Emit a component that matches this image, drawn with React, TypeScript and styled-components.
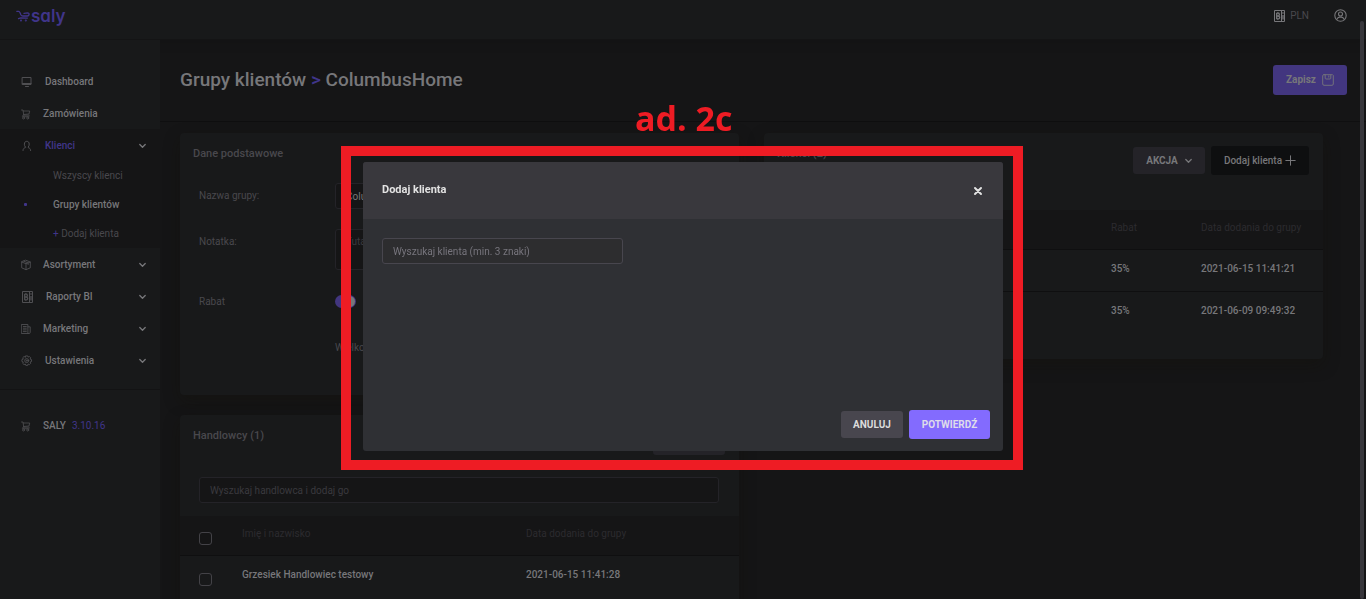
import React from "react";
import styled, { createGlobalStyle, css } from "styled-components";

const c = {
  page: "#151516",
  panel: "#18191a",
  line: "#0f0f10",
  text: "#77777a",
  muted: "#49484d",
  faint: "#2c2b2f",
  accent: "#40358a",
  accentFill: "#42367f",
  red: "#ee1c24",
};

const GlobalStyle = createGlobalStyle`
  * { box-sizing: border-box; }
  html, body, #root { height: 100%; }
  body {
    margin: 0;
    overflow: hidden;
    background: ${c.page};
    color: ${c.text};
    font: 500 10px/14px Roboto, "Liberation Sans", sans-serif;
  }
  button, input, textarea { font: inherit; color: inherit; margin: 0; }
  a { color: inherit; text-decoration: none; }
  h1, h2, p, ul { margin: 0; padding: 0; }
  ul { list-style: none; }
  svg { display: block; flex: none; }
`;

const Shell = styled.div`
  display: flex;
  flex-direction: column;
  height: 100vh;
`;

const TopBar = styled.header`
  display: flex;
  flex: none;
  align-items: center;
  justify-content: space-between;
  height: 40px;
  padding: 0 19px 8px 16px;
  background: ${c.panel};
  border-bottom: 1px solid #141415;
  box-shadow: 0 2px 12px rgba(0, 0, 0, 0.12);
`;

const Logo = styled.a`
  display: flex;
  align-items: center;
  gap: 1px;
  color: ${c.accent};
  font: 600 17px/20px Inter, sans-serif;
  font-feature-settings: "cv11";
`;

const TopTools = styled.div`
  display: flex;
  align-items: center;
  gap: 25px;
`;

const Currency = styled.span`
  display: flex;
  align-items: center;
  gap: 4px;
  color: ${c.muted};
  font-weight: 400;
  svg { color: ${c.text}; }
`;

const IconButton = styled.button`
  display: flex;
  padding: 0;
  border: 0;
  background: none;
`;

const CloseButton = styled(IconButton)`
  padding-top: 3px;
`;

const Columns = styled.div`
  display: flex;
  flex: 1;
  min-height: 0;
`;

const Sidebar = styled.nav`
  flex: none;
  width: 160px;
  padding-top: 25px;
  background: ${c.panel};
`;

const NavLink = styled.a<{ $active?: boolean }>`
  display: flex;
  align-items: center;
  gap: 12px;
  height: 32px;
  padding: 2px 14px 0 21px;
  color: ${(p) => (p.$active ? c.accent : c.text)};
  > svg { color: #4f4f52; }
  > svg:last-child:not(:first-child) { margin-left: auto; color: ${c.text}; }
`;

const ActiveGroup = styled.li`
  background: ${c.page};
`;

const SubLink = styled.a<{ $current?: boolean }>`
  display: flex;
  align-items: center;
  height: 29px;
  padding-left: 24px;
  color: ${(p) => (p.$current ? c.text : c.muted)};
  font-weight: ${(p) => (p.$current ? 500 : 400)};
  &::before {
    content: "";
    width: 3px;
    height: 3px;
    margin-right: 26px;
    border-radius: 1px;
    background: ${(p) => (p.$current ? c.accent : "transparent")};
  }
`;

const Accent = styled.span`
  color: ${c.accent};
`;

const Version = styled.div`
  margin-top: 13px;
  padding-top: 19px;
  border-top: 1px solid #131314;
`;

const VersionNumber = styled.span`
  margin-left: -6px;
  color: ${c.accent};
  font-weight: 400;
`;

const Main = styled.main`
  flex: 1;
  min-width: 0;
  overflow: hidden;
`;

const PageHead = styled.div`
  display: flex;
  align-items: center;
  justify-content: space-between;
  height: 82px;
  padding: 0 19px 2px 20px;
  border-bottom: 1px solid ${c.line};
`;

const PageTitle = styled.h1`
  font-size: 19px;
  line-height: 24px;
  font-weight: 500;
`;

const Button = styled.button<{ $kind: "save" | "grey" | "dark" | "cancel" | "confirm" }>`
  display: flex;
  align-items: center;
  justify-content: center;
  padding: 0;
  height: 29px;
  border: 0;
  border-radius: 3px;
  font-weight: 700;
  white-space: nowrap;
  ${(p) => p.$kind === "save" && css`height: 30px; width: 74px; gap: 6px; background: ${c.accentFill};`}
  ${(p) => p.$kind === "grey" && css`height: 27px; width: 72px; gap: 7px; background: #242328;`}
  ${(p) => p.$kind === "dark" && css`width: 98px; gap: 3px; background: #0e0f10; font-weight: 500;`}
  ${(p) => p.$kind === "cancel" && css`height: 27px; width: 62px; background: #48464e; color: #dcdcdc;`}
  ${(p) => p.$kind === "confirm" && css`width: 81px; background: #836bfe; color: #dedcea;`}
`;

const Grid = styled.div`
  display: grid;
  grid-template-columns: 1fr 1fr;
  gap: 25px;
  align-items: start;
  padding: 11px 43px 0 20px;
`;

const Stack = styled.div`
  display: grid;
  gap: 20px;
`;

const Card = styled.section`
  padding-bottom: 26px;
  border-radius: 4px;
  background: ${c.panel};
  box-shadow: 0 6px 16px rgba(20, 16, 10, 0.35);
`;

const CardHead = styled.div<{ $height: number }>`
  display: flex;
  align-items: flex-start;
  justify-content: space-between;
  height: ${(p) => p.$height}px;
  padding: 13px 14px 0 13px;
`;

const CardTitle = styled.h2`
  color: ${c.muted};
  font-size: 11px;
  line-height: 16px;
  font-weight: 500;
`;

const CardActions = styled.div`
  display: flex;
  align-items: center;
  gap: 6px;
`;

const Field = styled.div<{ $gap: number }>`
  display: grid;
  grid-template-columns: 136px 1fr;
  align-items: start;
  margin-bottom: ${(p) => p.$gap}px;
  padding: 0 20px 0 19px;
`;

const FieldLabel = styled.label`
  padding-top: 6px;
  color: ${c.muted};
  font-weight: 400;
`;

const inputStyle = css`
  display: block;
  width: 100%;
  height: 26px;
  padding: 0 10px;
  border: 1px solid #242328;
  border-radius: 3px;
  background: ${c.page};
  outline: 0;
  font-weight: 400;
  &::placeholder { color: #3a393e; opacity: 1; }
`;

const TextInput = styled.input`
  ${inputStyle}
`;

const NoteInput = styled.textarea`
  ${inputStyle}
  height: 41px;
  padding-top: 5px;
  resize: none;
`;

const SwitchCell = styled.div`
  padding-top: 6px;
`;

const Switch = styled.input`
  appearance: none;
  display: flex;
  justify-content: flex-end;
  width: 21px;
  height: 13px;
  border-radius: 7px;
  background: ${c.accentFill};
  &::after {
    content: "";
    width: 11px;
    height: 11px;
    margin: 1px;
    border-radius: 50%;
    background: #77777a;
  }
`;

const SearchRow = styled.div`
  padding: 0 20px 13px 19px;
`;

const Table = styled.table`
  width: 100%;
  border-collapse: collapse;
  table-layout: fixed;
  th, td {
    padding: 0;
    text-align: left;
    white-space: nowrap;
  }
  th {
    height: 39px;
    padding-bottom: 2px;
    background: ${c.page};
    color: ${c.faint};
    font-weight: 400;
  }
  td { height: 42px; padding-bottom: 2px; }
  tr { border-bottom: 1px solid ${c.line}; }
  tbody tr:last-child { border-bottom: 0; }
`;

const Check = styled.input`
  appearance: none;
  display: block;
  width: 13px;
  height: 13px;
  && { margin: 9px 0 0 19px; }
  border: 1px solid #434247;
  border-radius: 3px;
`;

const ScrollThumb = styled.div`
  position: fixed;
  top: 21px;
  right: 2px;
  bottom: 0;
  width: 4px;
  border-radius: 2px;
  background: #37363b;
`;

const Overlay = styled.div`
  position: fixed;
  inset: 0;
  display: flex;
  align-items: flex-start;
  justify-content: center;
  padding-top: 162px;
`;

const Modal = styled.div`
  width: 640px;
  border-radius: 3px;
  overflow: hidden;
  background: #2f3034;
  color: #e2e2e2;
`;

const ModalHead = styled.div`
  display: flex;
  align-items: center;
  justify-content: space-between;
  height: 57px;
  padding: 0 20px 2px 19px;
  background: #39383d;
  h2 { font-size: 11px; line-height: 16px; font-weight: 700; }
`;

const ModalBody = styled.div`
  min-height: 191px;
  padding: 19px;
`;

const ModalSearch = styled.input`
  ${inputStyle}
  width: 241px;
  border-color: #48464e;
  background: #2d2d2f;
  &::placeholder { color: #77757d; }
`;

const ModalFoot = styled.div`
  display: flex;
  align-items: center;
  justify-content: flex-end;
  gap: 6px;
  padding: 0 13px 12px;
`;

const Frame = styled.div`
  position: absolute;
  top: 146px;
  left: calc(50% - 342px);
  width: 682px;
  height: 324px;
  border: 10px solid ${c.red};
  pointer-events: none;
`;

const Caption = styled.p`
  position: absolute;
  top: 95px;
  left: calc(50% - 48px);
  color: ${c.red};
  font: 700 34px/46px "Open Sans", "Noto Sans", sans-serif;
`;

const stroke = { fill: "none", stroke: "currentColor", strokeLinecap: "round", strokeLinejoin: "round" } as const;

const Chevron = () => (
  <svg width="7" height="6" viewBox="0 0 7 6" {...stroke} strokeWidth="1.3"><path d="M.8 1.500 3.500 4.300 6.200 1.500" /></svg>
);
const MonitorIcon = () => (
  <svg width="12" height="12" viewBox="0 0 12 12" {...stroke}><path d="M1.500 1.500h8.500v7H1.500zM1.500 7.500h8.500M4.500 10.500h3" /></svg>
);
const CartIcon = () => (
  <svg width="10" height="12" viewBox="0 0 10 12" {...stroke} strokeWidth="0.8">
    <path d="M.5 2h1.500l.8 5.200h5.500M2.200 3h6.500L8 6 2.700 6.500M2.800 7.200C1 7.200.8 8.700 2 8.700h6" />
    <circle cx="2.500" cy="10" r="1" /><circle cx="6.700" cy="10" r="1" />
  </svg>
);
const PersonIcon = () => (
  <svg width="12" height="12" viewBox="0 0 12 12" {...stroke}>
    <path d="M4.400 7C3.600 6.200 3.400 5.200 3.400 4c0-1.700 1-2.700 2.400-2.700S8.200 2.300 8.200 4c0 1.200-.2 2.200-1 3l.2.8c1.400.3 2.200 1 2.200 2.700M4.400 7l-.2.8C2.800 8.100 2 8.800 2 10.500" />
  </svg>
);
const BoxIcon = () => (
  <svg width="10" height="12" viewBox="0 0 10 12" {...stroke} strokeWidth="0.9">
    <path d="M5 1.300 9.300 3v5.800L5 10.700.7 8.800V3zM.7 3 5 4.700 9.300 3M5 4.700v6M2.800 2.200 7.100 3.900v1.700" />
  </svg>
);
const BiIcon = () => (
  <svg width="13" height="12" viewBox="0 0 13 12" {...stroke} strokeLinecap="butt" strokeLinejoin="miter">
    <path d="M1.500.5h10v11h-10zM8.500.5v11" />
    <path d="M3.700 3v6M3.700 3h1.300c1.800 0 1.800 3 0 3 2.200 0 2.200 3 0 3H3.700M3.700 6H5M10 5v4.500M10 2.300v1.400" strokeWidth="1.300" />
  </svg>
);
const NewsIcon = () => (
  <svg width="10" height="12" viewBox="0 0 10 12" {...stroke} strokeWidth="0.9">
    <path d="M.7 1.500h6.200v9H.7zM6.900 3.800h2.300v5.700c0 .6-.4 1-1.100 1H6.900M2.300 3.500h3M2.300 5.200h3M2.300 6.900h3M2.300 8.600h3" />
  </svg>
);
const GearIcon = () => (
  <svg width="12" height="12" viewBox="0 0 12 12" {...stroke} strokeWidth="0.9">
    <path d="M4.800.9h1.900l.4 1.200 1.300-.6 1.300 1.300-.6 1.300 1.400.5v1.900l-1.400.5.6 1.300-1.300 1.300-1.300-.6-.4 1.400H4.800l-.5-1.400-1.300.6-1.300-1.300.6-1.300L.9 6.500V4.600l1.400-.5-.6-1.300L3 1.500l1.300.6z" />
    <circle cx="5.700" cy="5.600" r="2" /><circle cx="5.700" cy="5.600" r=".5" />
  </svg>
);
const AccountIcon = () => (
  <svg width="13" height="13" viewBox="0 0 13 13" {...stroke} strokeWidth="1.100">
    <circle cx="6.500" cy="6.500" r="5.700" /><circle cx="6.500" cy="5" r="2" />
    <path d="M3.200 10c.3-1.300 1.300-1.800 2.300-1.900h2c1 .1 2 .6 2.300 1.900" />
  </svg>
);
const SaveIcon = () => (
  <svg width="12" height="12" viewBox="0 0 12 12" {...stroke} strokeWidth="0.9">
    <path d="M2 .7h8.500l.8.8V10c0 .8-.5 1.300-1.300 1.300H2C1.200 11.300.7 10.800.7 10V2C.7 1.200 1.200.7 2 .7zM3.200.9v3.300c0 .5.3.8.8.8h4c.5 0 .8-.3.8-.8V.9M6.800 1.900v1.300" />
  </svg>
);
const PlusIcon = () => (
  <svg width="11" height="11" viewBox="0 0 11 11" {...stroke}><path d="M5.500 .8v9.400M.8 5.500h9.400" /></svg>
);
const CloseIcon = () => (
  <svg width="10" height="10" viewBox="0 0 10 10" {...stroke} strokeWidth="2"><path d="M2 2l6 6M8 2 2 8" /></svg>
);
const LogoCart = () => (
  <svg width="14" height="12" viewBox="0 0 14 12" {...stroke} strokeWidth="1.300">
    <path d="M.8 1.300h1.800c.7 0 1 .5 1.300 1.200L5 5c.4.8.8 1 1.700 1h4.500c1.200 0 1.900-.8 1.900-1.900 0-.8-.6-1.300-1.500-1.300L8 3.300M2.500 8.700l2.500-.8 6.400.2" />
    <circle cx="5" cy="10.500" r=".4" /><circle cx="9.800" cy="10.500" r=".4" />
  </svg>
);

export default function App() {
  return (
    <>
      <GlobalStyle />
      <Shell>
        <TopBar>
          <Logo href="#"><LogoCart />saly</Logo>
          <TopTools>
            <Currency><BiIcon />PLN</Currency>
            <IconButton aria-label="Konto"><AccountIcon /></IconButton>
          </TopTools>
        </TopBar>
        <Columns>
          <Sidebar>
            <ul>
              <li><NavLink href="#"><MonitorIcon />Dashboard</NavLink></li>
              <li><NavLink href="#"><CartIcon />Zamówienia</NavLink></li>
              <ActiveGroup>
                <NavLink href="#" $active><PersonIcon />Klienci<Chevron /></NavLink>
                <ul>
                  <li><SubLink href="#">Wszyscy klienci</SubLink></li>
                  <li><SubLink href="#" $current>Grupy klientów</SubLink></li>
                  <li><SubLink href="#"><span><Accent>+</Accent> Dodaj klienta</span></SubLink></li>
                </ul>
              </ActiveGroup>
              <li><NavLink href="#"><BoxIcon />Asortyment<Chevron /></NavLink></li>
              <li><NavLink href="#"><BiIcon />Raporty BI<Chevron /></NavLink></li>
              <li><NavLink href="#"><NewsIcon />Marketing<Chevron /></NavLink></li>
              <li><NavLink href="#"><GearIcon />Ustawienia<Chevron /></NavLink></li>
            </ul>
            <Version>
              <NavLink href="#"><CartIcon />SALY<VersionNumber>3.10.16</VersionNumber></NavLink>
            </Version>
          </Sidebar>
          <Main>
            <PageHead>
              <PageTitle>Grupy klientów <Accent>&gt;</Accent> ColumbusHome</PageTitle>
              <Button $kind="save">Zapisz<SaveIcon /></Button>
            </PageHead>
            <Grid>
              <Stack>
                <Card>
                  <CardHead $height={50}><CardTitle>Dane podstawowe</CardTitle></CardHead>
                  <Field $gap={20}>
                    <FieldLabel htmlFor="name">Nazwa grupy:</FieldLabel>
                    <TextInput id="name" defaultValue="ColumbusHome" />
                  </Field>
                  <Field $gap={19}>
                    <FieldLabel htmlFor="note">Notatka:</FieldLabel>
                    <NoteInput id="note" placeholder="Tutaj" />
                  </Field>
                  <Field $gap={26}>
                    <FieldLabel htmlFor="discount">Rabat</FieldLabel>
                    <SwitchCell><Switch id="discount" type="checkbox" role="switch" defaultChecked /></SwitchCell>
                  </Field>
                  <Field $gap={14}>
                    <span />
                    <FieldLabel as="span">Wielkość rabatu</FieldLabel>
                  </Field>
                </Card>
                <Card>
                  <CardHead $height={62}>
                    <CardTitle>Handlowcy (1)</CardTitle>
                    <Button $kind="grey">AKCJA<Chevron /></Button>
                  </CardHead>
                  <SearchRow><TextInput aria-label="Handlowiec" placeholder="Wyszukaj handlowca i dodaj go" /></SearchRow>
                  <Table>
                    <colgroup><col width="62" /><col width="284" /><col /></colgroup>
                    <thead>
                      <tr><th><Check type="checkbox" aria-label="Wszyscy" /></th><th>Imię i nazwisko</th><th>Data dodania do grupy</th></tr>
                    </thead>
                    <tbody>
                      <tr><td><Check type="checkbox" aria-label="Grzesiek" /></td><td>Grzesiek Handlowiec testowy</td><td>2021-06-15 11:41:28</td></tr>
                    </tbody>
                  </Table>
                </Card>
              </Stack>
              <Card>
                <CardHead $height={77}>
                  <CardTitle>Klienci (2)</CardTitle>
                  <CardActions>
                    <Button $kind="grey">AKCJA<Chevron /></Button>
                    <Button $kind="dark">Dodaj klienta<PlusIcon /></Button>
                  </CardActions>
                </CardHead>
                <Table>
                  <colgroup><col /><col width="90" /><col width="122" /></colgroup>
                  <thead><tr><th /><th>Rabat</th><th>Data dodania do grupy</th></tr></thead>
                  <tbody>
                    <tr><td /><td>35%</td><td>2021-06-15 11:41:21</td></tr>
                    <tr><td /><td>35%</td><td>2021-06-09 09:49:32</td></tr>
                  </tbody>
                </Table>
              </Card>
            </Grid>
          </Main>
        </Columns>
      </Shell>
      <ScrollThumb />
      <Overlay>
        <Modal role="dialog" aria-labelledby="dialog-title">
          <ModalHead>
            <h2 id="dialog-title">Dodaj klienta</h2>
            <CloseButton aria-label="Zamknij"><CloseIcon /></CloseButton>
          </ModalHead>
          <ModalBody><ModalSearch aria-label="Klient" placeholder="Wyszukaj klienta (min. 3 znaki)" /></ModalBody>
          <ModalFoot>
            <Button $kind="cancel">ANULUJ</Button>
            <Button $kind="confirm">POTWIERDŹ</Button>
          </ModalFoot>
        </Modal>
        <Frame />
        <Caption>ad. 2c</Caption>
      </Overlay>
    </>
  );
}
